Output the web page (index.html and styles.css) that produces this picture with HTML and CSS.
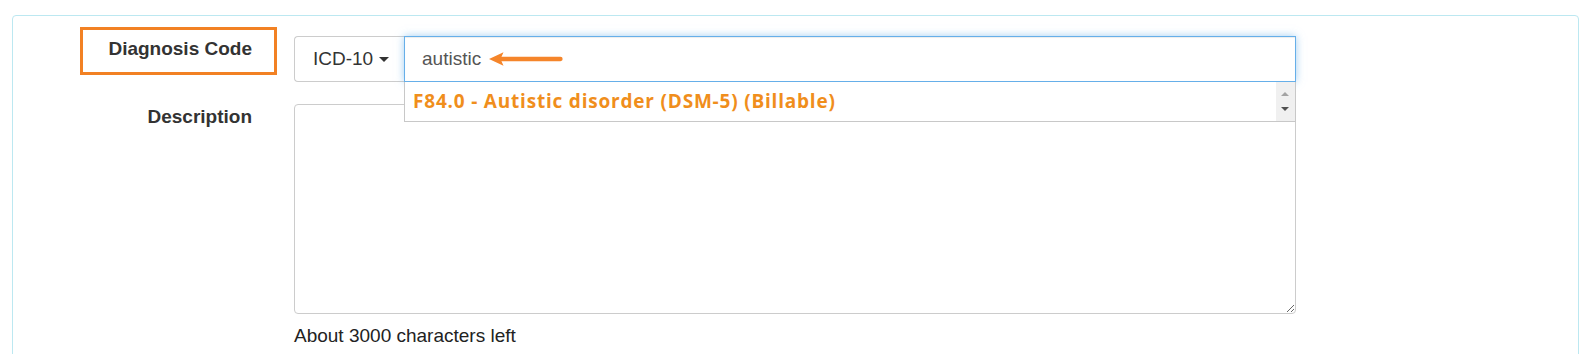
FILE: index.html
```html
<!DOCTYPE html>
<html>
<head>
  <meta name="viewport" content="width=device-width, initial-scale=1">
  <link rel="stylesheet" href="styles.css">
</head>
<body>
  <div class="panel">
    <div class="form-row first">
      <div class="label-col">
        <label class="control-label marked">Diagnosis Code</label>
      </div>
      <div class="control-col">
        <div class="input-group">
          <button class="code-btn">ICD-10 <span class="caret"></span></button>
          <div class="search-wrap">
            <input class="search-input" type="text" value="autistic">
            <svg class="hint-arrow" width="74" height="14" viewBox="0 0 74 14">
              <path d="M0 7 L14.5 0.3 L11.5 7 L14.5 13.7 Z" fill="#f5852a"/>
              <line x1="11" y1="7" x2="71.5" y2="7" stroke="#f5852a" stroke-width="4.3" stroke-linecap="round"/>
            </svg>
            <div class="suggestions">
              <div class="suggestion">F84.0 - Autistic disorder (DSM-5) (Billable)</div>
              <div class="fake-scroll">
                <span class="up"></span>
                <span class="down"></span>
              </div>
            </div>
          </div>
        </div>
      </div>
    </div>

    <div class="form-row second">
      <div class="label-col">
        <label class="control-label">Description</label>
      </div>
      <div class="control-col">
        <textarea class="desc"></textarea>
        <p class="chars-left">About 3000 characters left</p>
      </div>
    </div>
  </div>
</body>
</html>
```

FILE: styles.css
```css
    body {
      background-color: #fff;
      color: #333;
      font-family: "Liberation Sans", Arial, sans-serif;
      font-size: 19px;
      margin: 0;
      padding: 0;
    }
    .panel {
      margin: 15px 9px 0 12px;
      border: 1px solid #bce8f1;
      border-radius: 4px;
      padding: 11px 0 40px 0;
    }
    .form-row {
      display: flex;
      align-items: flex-start;
    }
    .form-row.second {
      margin-top: 22px;
    }
    .label-col {
      width: 281px;
      flex: none;
      display: flex;
      justify-content: flex-end;
      padding-right: 42px;
      box-sizing: border-box;
    }
    .form-row.first .label-col {
      padding-right: 17px;
    }
    .control-label {
      font-weight: bold;
      line-height: 21px;
      color: #333;
      padding-top: 2px;
    }
    .control-label.marked {
      border: 3px solid #f28123;
      padding: 8px 22px 13px 25px;
    }
    .control-col {
      width: 1002px;
      flex: none;
    }
    .form-row.first .control-col {
      margin-top: 9px;
    }
    .input-group {
      display: flex;
      height: 46px;
    }
    .code-btn {
      width: 110px;
      height: 46px;
      box-sizing: border-box;
      border: 1px solid #ccc;
      border-right: none;
      border-radius: 4px 0 0 4px;
      background: #fff;
      color: #333;
      font-family: "Liberation Sans", Arial, sans-serif;
      font-size: 19px;
      padding: 0 0 0 18px;
      text-align: left;
      display: flex;
      align-items: center;
    }
    .caret {
      display: inline-block;
      width: 0;
      height: 0;
      margin-left: 6px;
      margin-top: 1px;
      border-top: 5px solid #333;
      border-left: 5px solid transparent;
      border-right: 5px solid transparent;
    }
    .search-wrap {
      position: relative;
      flex: 1;
    }
    .search-input {
      width: 100%;
      height: 46px;
      box-sizing: border-box;
      border: 1px solid #66afe9;
      outline: none;
      box-shadow: inset 0 1px 1px rgba(0,0,0,.075), 0 0 8px rgba(102,175,233,.6);
      padding: 0 17px;
      font-family: "Liberation Sans", Arial, sans-serif;
      font-size: 19px;
      color: #555;
    }
    .hint-arrow {
      position: absolute;
      left: 85px;
      top: 16px;
    }
    .suggestions {
      position: absolute;
      left: 0;
      right: 0;
      top: 46px;
      height: 40px;
      box-sizing: border-box;
      border: 1px solid #c8c8c8;
      border-top: none;
      background: #fff;
      display: flex;
      z-index: 2;
    }
    .suggestion {
      flex: 1;
      padding-left: 8px;
      line-height: 39px;
      font-family: "Open Sans", "Noto Sans", sans-serif;
      font-weight: 700;
      font-size: 19px;
      letter-spacing: 0.8px;
      color: #f08e1c;
    }
    .fake-scroll {
      width: 19px;
      background: #f0f0f0;
      position: relative;
    }
    .fake-scroll .up, .fake-scroll .down {
      position: absolute;
      left: 5px;
      width: 0;
      height: 0;
      border-left: 4.5px solid transparent;
      border-right: 4.5px solid transparent;
    }
    .fake-scroll .up {
      top: 10px;
      border-bottom: 4px solid #a3a3a3;
    }
    .fake-scroll .down {
      top: 25px;
      border-top: 4px solid #505050;
    }
    .desc {
      display: block;
      width: 1002px;
      height: 210px;
      box-sizing: border-box;
      border: 1px solid #ccc;
      border-radius: 4px;
      margin: 0;
      font-family: "Liberation Sans", Arial, sans-serif;
      font-size: 19px;
    }
    .chars-left {
      margin: 11px 0 0 0;
      line-height: 21px;
      color: #222;
    }
```
